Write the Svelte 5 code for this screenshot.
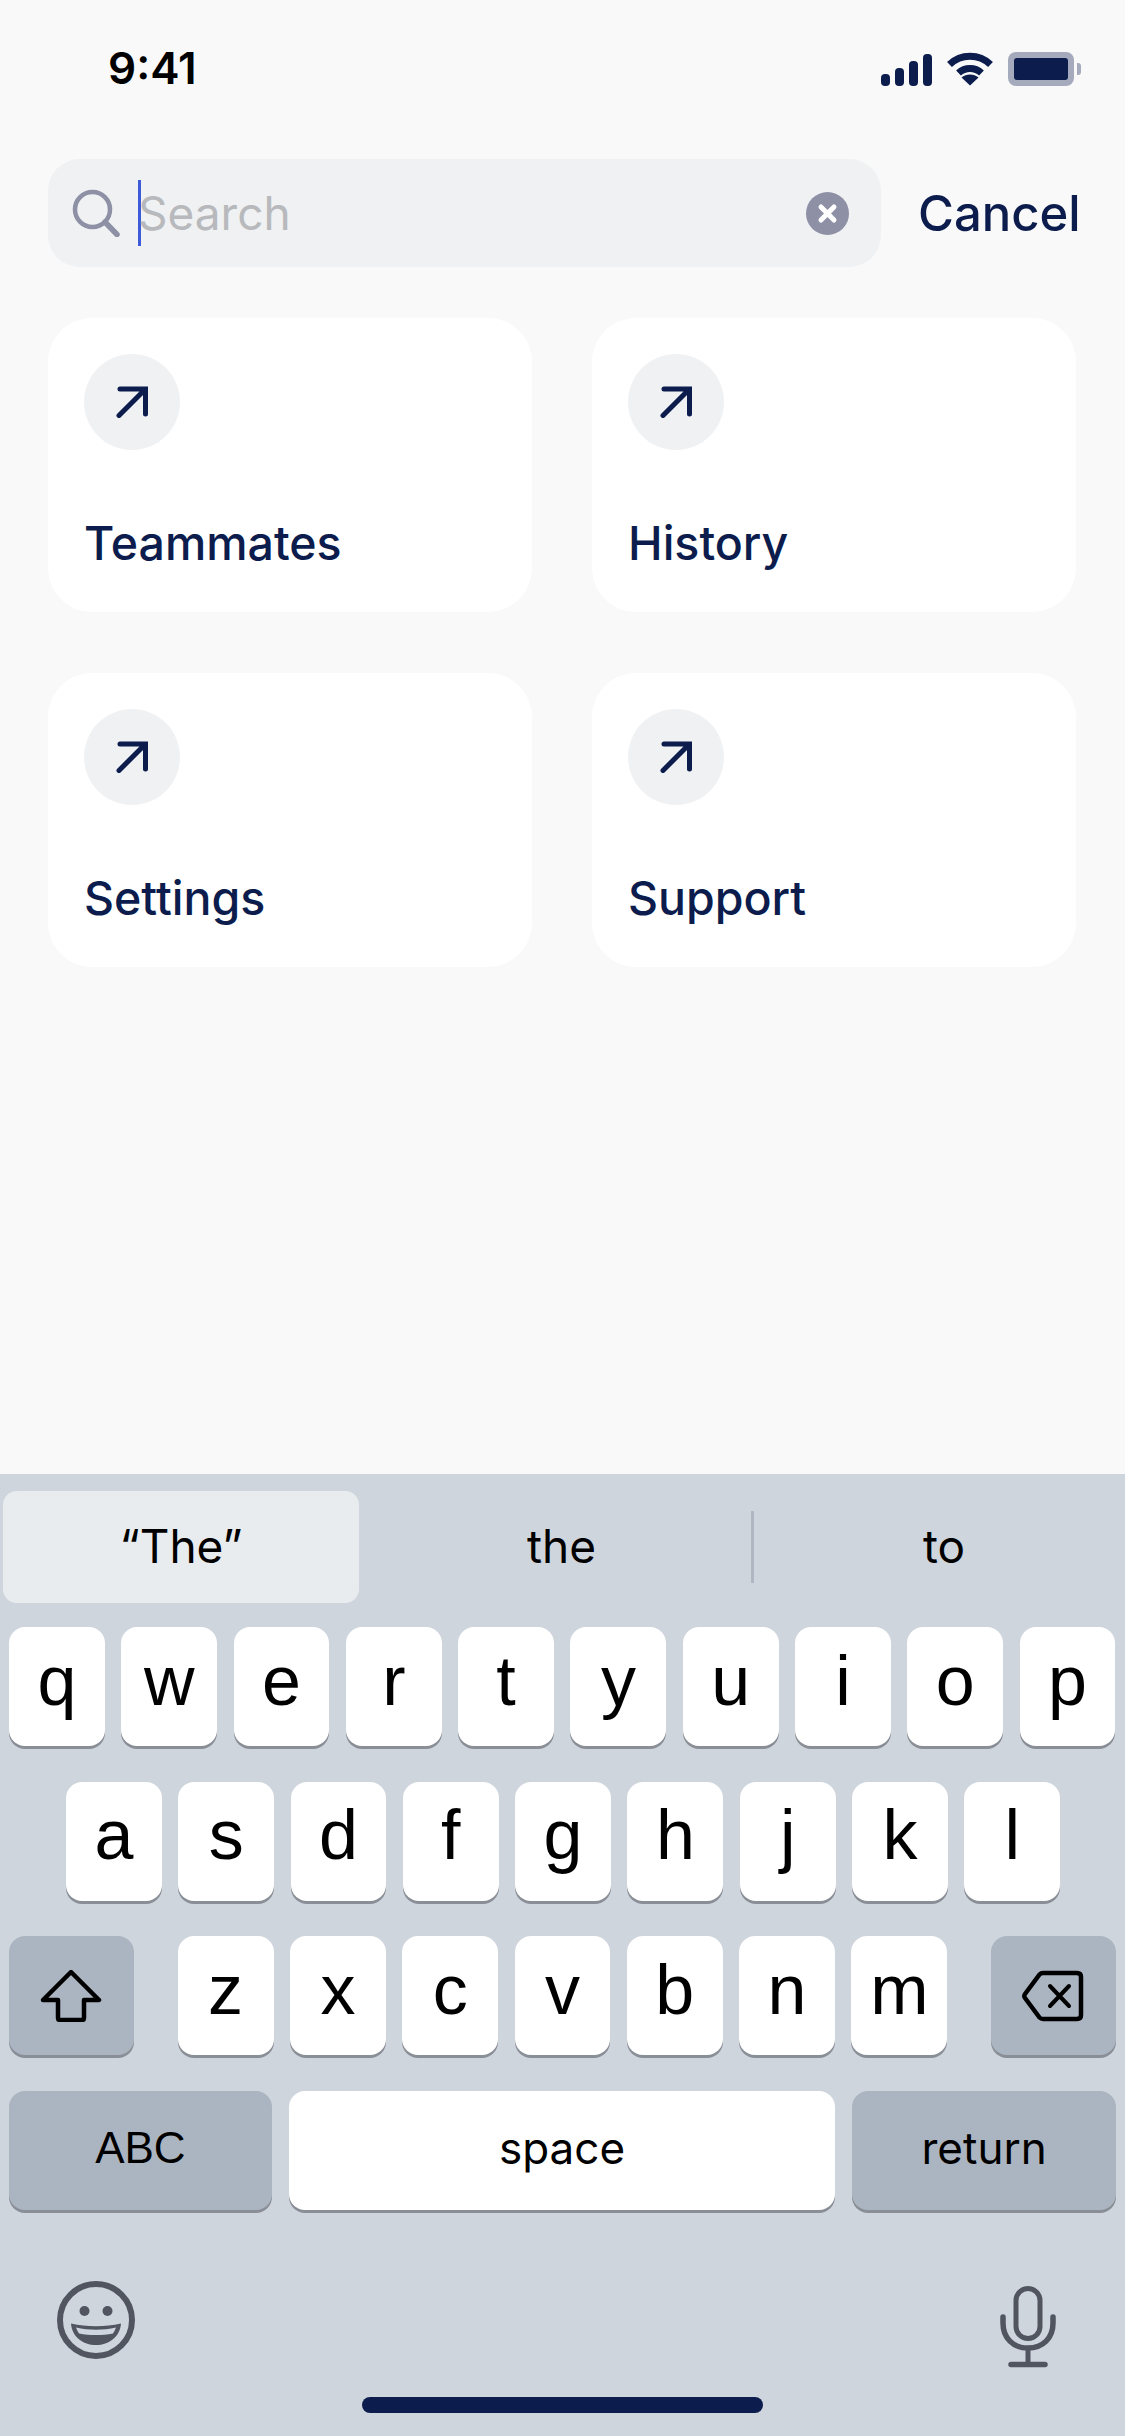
<script lang="ts">
  const cards = ["Teammates", "History", "Settings", "Support"];
  const row1 = ["q", "w", "e", "r", "t", "y", "u", "i", "o", "p"];
  const row2 = ["a", "s", "d", "f", "g", "h", "j", "k", "l"];
  const row3 = ["z", "x", "c", "v", "b", "n", "m"];
</script>

<div class="screen">
  <div class="status">
    <span class="time">9:41</span>
    <div class="status-icons">
      <div class="signal">
        <i class="b1"></i>
        <i class="b2"></i>
        <i class="b3"></i>
        <i class="b4"></i>
      </div>
      <svg class="wifi" width="46" height="34" viewBox="0 0 46 34" fill="none">
        <path d="M2.5 12.5C14 1.5 32 1.5 43.5 12.5" stroke="#0b1c4d" stroke-width="7" stroke-linecap="butt" />
        <path d="M11.5 21C18 15 28 15 34.5 21" stroke="#0b1c4d" stroke-width="7" />
        <path d="M23 33.5L14.5 25.5C19 21.5 27 21.5 31.5 25.5Z" fill="#0b1c4d" />
      </svg>
      <div class="battery">
        <div class="cell"><div class="charge"></div></div>
        <div class="nib"></div>
      </div>
    </div>
  </div>

  <div class="search-row">
    <div class="search">
      <svg class="glass" width="48" height="48" viewBox="0 0 48 48" fill="none">
        <circle cx="20.5" cy="20.5" r="17.5" stroke="#8e90a6" stroke-width="4.5" />
        <path d="M33 33L45 45.5" stroke="#8e90a6" stroke-width="5.5" stroke-linecap="round" />
      </svg>
      <div class="caret"></div>
      <span class="placeholder">Search</span>
      <svg class="clear" width="43" height="43" viewBox="0 0 43 43">
        <circle cx="21.5" cy="21.5" r="21.5" fill="#8e90a6" />
        <path d="M15 15L28 28M28 15L15 28" stroke="#fff" stroke-width="5" stroke-linecap="round" />
      </svg>
    </div>
    <span class="cancel">Cancel</span>
  </div>

  <div class="cards">
    {#each cards as card}
      <div class="card">
        <div class="circle">
          <svg width="32" height="32" viewBox="0 0 32 32" fill="none">
            <path d="M3 29.5L29 3.5M4 3H29.5V28" stroke="#0b1c4d" stroke-width="5" stroke-linecap="round" stroke-linejoin="miter" />
          </svg>
        </div>
        <span class="card-label">{card}</span>
      </div>
    {/each}
  </div>

  <div class="keyboard">
    <div class="suggestions">
      <div class="sugg active">“The”</div>
      <div class="sugg mid">the</div>
      <div class="divider"></div>
      <div class="sugg last">to</div>
    </div>

    <div class="row">
      {#each row1 as k}
        <div class="key">{k}</div>
      {/each}
    </div>
    <div class="row row-mid">
      {#each row2 as k}
        <div class="key">{k}</div>
      {/each}
    </div>
    <div class="row row-third">
      <div class="key fn wide">
        <svg class="shift" width="62" height="52" viewBox="0 0 62 52" fill="none">
          <path d="M31 2L59 30H44V48C44 49.5 43 50 42 50H20C19 50 18 49.5 18 48V30H3Z" stroke="#000" stroke-width="4.5" stroke-linejoin="round" />
        </svg>
      </div>
      <div class="letters">
        {#each row3 as k}
          <div class="key">{k}</div>
        {/each}
      </div>
      <div class="key fn wide">
        <svg width="62" height="52" viewBox="0 0 62 52" fill="none">
          <path d="M21 3H55C57.5 3 59 4.5 59 7V45C59 47.5 57.5 49 55 49H21C19.5 49 18.5 48.5 17.5 47.5L3 28C2.3 27 2.3 25 3 24L17.5 4.5C18.5 3.5 19.5 3 21 3Z" stroke="#000" stroke-width="4.5" stroke-linejoin="round" />
          <path d="M28 16L47 36M47 16L28 36" stroke="#000" stroke-width="4" stroke-linecap="round" />
        </svg>
      </div>
    </div>
    <div class="row row-bottom">
      <div class="key fn label abc">ABC</div>
      <div class="key label space">space</div>
      <div class="key fn label ret">return</div>
    </div>

    <div class="kb-bottom">
      <svg width="78" height="78" viewBox="0 0 78 78" fill="none">
        <circle cx="39" cy="39" r="36" stroke="#50555f" stroke-width="6" />
        <circle cx="27.5" cy="30" r="5" fill="#50555f" />
        <circle cx="50.5" cy="30" r="5" fill="#50555f" />
        <path d="M14 42.5C30 46 48 46 64 42.5C63 56 52 64 39 64C26 64 15 56 14 42.5Z" fill="#50555f" />
        <path d="M19 46.5C32 49.5 46 49.5 59 46.5C58 49 57 51 56 52.5C45 54.5 33 54.5 22 52.5C21 51 20 49 19 46.5Z" fill="#cfd5dd" />
      </svg>
      <svg class="mic" width="56" height="82" viewBox="0 0 56 82" fill="none">
        <rect x="16" y="2.5" width="24" height="50" rx="12" stroke="#50555f" stroke-width="5" />
        <path d="M3 31V37C3 52 13 62 28 62C43 62 53 52 53 37V31" stroke="#50555f" stroke-width="5.5" stroke-linecap="round" />
        <path d="M28 62V78" stroke="#50555f" stroke-width="5" />
        <path d="M11 78.5H45" stroke="#50555f" stroke-width="5.5" stroke-linecap="round" />
      </svg>
    </div>

    <div class="home-wrap"><div class="home"></div></div>
  </div>
</div>

<style>
  :global(body) {
    margin: 0;
    background: #f9f9fa;
  }

  .screen {
    width: 1125px;
    height: 2436px;
    display: flex;
    flex-direction: column;
    background: #f9f9fa;
    color: #0b1c4d;
    font-family: Inter, "Liberation Sans", sans-serif;
    overflow: hidden;
  }

  .status {
    height: 159px;
    box-sizing: border-box;
    padding: 42px 44px 0 108px;
    display: flex;
    justify-content: space-between;
    align-items: flex-start;
    flex-shrink: 0;
  }
  .time {
    font-weight: 600;
    font-size: 44px;
    line-height: 52px;
    color: #000;
  }
  .status-icons {
    display: flex;
    align-items: flex-start;
    margin-top: 10px;
  }
  .signal {
    display: flex;
    align-items: flex-end;
    gap: 5px;
    height: 33px;
    margin-top: 1px;
  }
  .signal i {
    display: block;
    width: 9px;
    border-radius: 4px;
    background: #0b1c4d;
  }
  .b1 { height: 12px; }
  .b2 { height: 18px; }
  .b3 { height: 25px; }
  .b4 { height: 32px; }
  .wifi {
    margin-left: 15px;
  }
  .battery {
    display: flex;
    align-items: center;
    margin-left: 15px;
  }
  .cell {
    width: 66px;
    height: 34px;
    box-sizing: border-box;
    padding: 6px;
    border-radius: 8px;
    background: #a5abbc;
  }
  .charge {
    height: 22px;
    border-radius: 3px;
    background: #0b1c4d;
  }
  .nib {
    width: 4px;
    height: 12px;
    margin-left: 3px;
    border-radius: 0 3px 3px 0;
    background: #a5abbc;
  }

  .search-row {
    display: flex;
    align-items: center;
    padding: 0 0 0 48px;
    flex-shrink: 0;
  }
  .search {
    width: 833px;
    height: 108px;
    box-sizing: border-box;
    padding: 0 32px 0 24px;
    border-radius: 32px;
    background: #eff1f2;
    display: flex;
    align-items: center;
  }
  .glass {
    flex-shrink: 0;
  }
  .caret {
    width: 3px;
    height: 66px;
    margin-left: 18px;
    background: #3d5bd9;
    flex-shrink: 0;
  }
  .placeholder {
    margin-left: -3px;
    font-size: 46px;
    color: #b8b9bd;
    flex: 1;
  }
  .cancel {
    margin-left: 37px;
    font-size: 49px;
    font-weight: 460;
  }

  .cards {
    display: grid;
    grid-template-columns: 484px 484px;
    grid-auto-rows: 294px;
    column-gap: 60px;
    row-gap: 61px;
    padding: 51px 0 0 48px;
    flex: 1;
    align-content: start;
  }
  .card {
    box-sizing: border-box;
    padding: 36px 36px 41px;
    border-radius: 44px;
    background: #fff;
    display: flex;
    flex-direction: column;
    justify-content: space-between;
  }
  .circle {
    width: 96px;
    height: 96px;
    border-radius: 50%;
    background: #eff1f2;
    display: flex;
    align-items: center;
    justify-content: center;
  }
  .card-label {
    font-size: 46.5px;
    font-weight: 460;
    line-height: 56px;
  }

  .keyboard {
    height: 962px;
    flex-shrink: 0;
    box-sizing: border-box;
    background: #cfd5dd;
    padding-top: 17px;
    color: #000;
    font-family: "Liberation Sans", sans-serif;
  }
  .suggestions {
    height: 112px;
    padding: 0 3px;
    display: grid;
    grid-template-columns: 356px 392px 3px 1fr;
    align-items: center;
  }
  .sugg {
    height: 110px;
    padding-bottom: 2px;
    display: flex;
    align-items: center;
    justify-content: center;
    font-family: Inter, "Liberation Sans", sans-serif;
    font-size: 46px;
  }
  .sugg.active {
    border-radius: 14px;
    background: #e9ecef;
  }
  .sugg.mid {
    padding-left: 13px;
  }
  .sugg.last {
    padding-left: 12px;
  }
  .divider {
    height: 72px;
    background: #b0b6c2;
  }

  .row {
    display: flex;
    gap: 16.5px;
    padding: 0 9px;
    height: 122px;
    margin-top: 32.5px;
  }
  .suggestions + .row {
    margin-top: 24px;
  }
  .row-mid {
    padding-left: 66px;
  }
  .row-third {
    gap: 0;
    justify-content: space-between;
  }
  .letters {
    display: flex;
    gap: 16.5px;
  }
  .row-bottom {
    gap: 17.5px;
  }
  .key {
    width: 95.8px;
    height: 119px;
    box-sizing: border-box;
    padding-bottom: 12px;
    border-radius: 16px;
    background: #fff;
    box-shadow: 0 3px 0 #8a8e96;
    display: flex;
    align-items: center;
    justify-content: center;
    font-size: 70px;
    line-height: 1;
  }
  .fn {
    background: #abb5c1;
  }
  .wide {
    width: 125px;
    padding-bottom: 0;
  }
  .shift {
    margin-left: -2px;
  }
  .label {
    font-size: 44px;
    padding-bottom: 4px;
  }
  .abc {
    width: 263px;
  }
  .space {
    width: 546px;
    font-family: Inter, "Liberation Sans", sans-serif;
  }
  .ret {
    width: 264px;
    font-family: Inter, "Liberation Sans", sans-serif;
  }

  .kb-bottom {
    display: flex;
    justify-content: space-between;
    align-items: flex-start;
    padding: 68px 69px 0 57px;
    height: 113px;
  }
  .mic {
    margin-top: 5px;
  }
  .home-wrap {
    display: flex;
    justify-content: center;
    padding-top: 3.5px;
  }
  .home {
    width: 401px;
    height: 16px;
    border-radius: 8px;
    background: #0b1c4d;
  }
</style>
